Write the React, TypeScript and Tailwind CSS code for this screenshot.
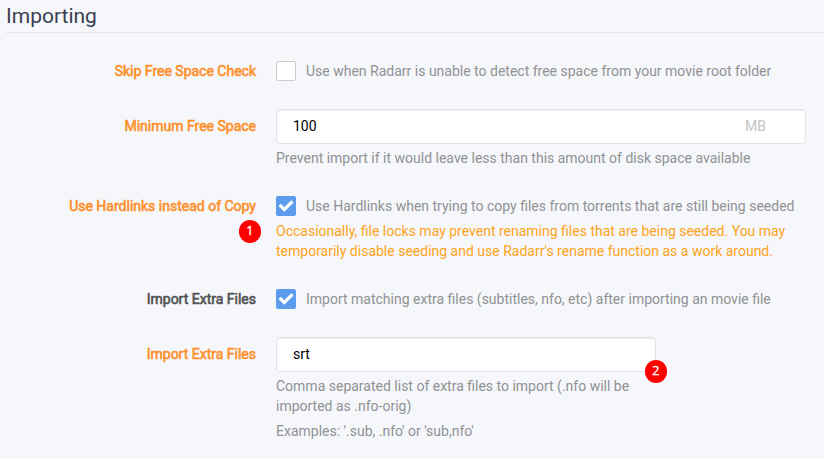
import type { ReactNode } from 'react';

function Row({ label, advanced = false, className = '', children }: { label: string; advanced?: boolean; className?: string; children: ReactNode }) {
  return (
    <div className={`flex items-start ${className}`}>
      <div
        className={`mr-5 w-[256px] shrink-0 whitespace-nowrap text-right font-normal leading-[35px] [-webkit-text-stroke:0.6px_currentColor] ${
          advanced ? 'text-[#ff902b]' : 'text-[#515253]'
        }`}
      >
        {label}
      </div>
      {children}
    </div>
  );
}

function Check({ checked = false, children }: { checked?: boolean; children: ReactNode }) {
  return (
    <div className="flex pt-[7px]">
      <span
        className={`mr-2.5 flex size-5 shrink-0 items-center justify-center rounded-[2px] border ${
          checked ? 'border-[#5d9cec] bg-[#5d9cec]' : 'border-[#ccc] bg-white'
        }`}
      >
        {checked && (
          <svg viewBox="0 0 512 512" className="size-[14px] shrink-0 overflow-visible" fill="#fff" stroke="#fff" strokeWidth="22">
            <path d="M173.898 439.404l-166.4-166.4c-9.997-9.997-9.997-26.206 0-36.204l36.203-36.204c9.997-9.998 26.207-9.998 36.204 0L192 312.69 432.095 72.596c9.997-9.997 26.207-9.997 36.204 0l36.203 36.204c9.997 9.997 9.997 26.206 0 36.204l-294.4 294.401c-9.998 9.997-26.207 9.997-36.204-.001z" />
          </svg>
        )}
      </span>
      <span className="whitespace-nowrap leading-5">{children}</span>
    </div>
  );
}

function Field({ value, unit, children }: { value: string; unit?: string; children?: ReactNode }) {
  return (
    <div className="relative flex h-[35px] items-center justify-between rounded border border-[#dde6e9] bg-white pl-4 pr-[39px] text-black shadow-[inset_0_1px_1px_rgba(0,0,0,0.075)]">
      <span>{value}</span>
      {unit && <span className="text-[#c3c3c3]">{unit}</span>}
      {children}
    </div>
  );
}

function Badge({ className, children }: { className: string; children: ReactNode }) {
  return (
    <span
      className={`absolute flex size-[22.5px] items-center justify-center rounded-full bg-[#f00] font-['Open_Sans',sans-serif] text-[12.5px] font-normal leading-none text-white [-webkit-text-stroke:0.3px_currentColor] ${className}`}
    >
      {children}
    </span>
  );
}

export default function App() {
  return (
    <div className="h-[459px] w-[824px] overflow-hidden bg-[#f5f7fa] font-[Roboto,sans-serif] text-[14px] text-[#909293]">
      <h2 className="ml-1.5 h-[33px] border-b border-[#e5e5e5] text-[21px] leading-8 text-[#3a3f51]">Importing</h2>

      <Row label="Skip Free Space Check" advanced className="mt-[21px] h-[55px]">
        <Check>Use when Radarr is unable to detect free space from your movie root folder</Check>
      </Row>

      <Row label="Minimum Free Space" advanced className="h-20">
        <div className="w-[530px]">
          <Field value="100" unit="MB" />
          <p className="mt-1 leading-5">Prevent import if it would leave less than this amount of disk space available</p>
        </div>
      </Row>

      <Row label="Use Hardlinks instead of Copy" advanced className="relative h-[93px]">
        <div className="w-[530px]">
          <Check checked>Use Hardlinks when trying to copy files from torrents that are still being seeded</Check>
          <p className="mt-[5px] leading-5 text-[#ffa31a]">
            Occasionally, file locks may prevent renaming files that are being seeded. You may temporarily disable seeding and use Radarr's rename function as a work around.
          </p>
        </div>
        <Badge className="left-[238.5px] top-[31.4px]">1</Badge>
      </Row>

      <Row label="Import Extra Files" className="h-[55px]">
        <Check checked>Import matching extra files (subtitles, nfo, etc) after importing an movie file</Check>
      </Row>

      <Row label="Import Extra Files" advanced>
        <div className="w-[380px]">
          <Field value="srt">
            <Badge className="-right-[12px] top-[22.3px]">2</Badge>
          </Field>
          <p className="mt-1 leading-5">Comma separated list of extra files to import (.nfo will be imported as .nfo-orig)</p>
          <p className="mt-[5px] leading-5">Examples: '.sub, .nfo' or 'sub,nfo'</p>
        </div>
      </Row>
    </div>
  );
}
